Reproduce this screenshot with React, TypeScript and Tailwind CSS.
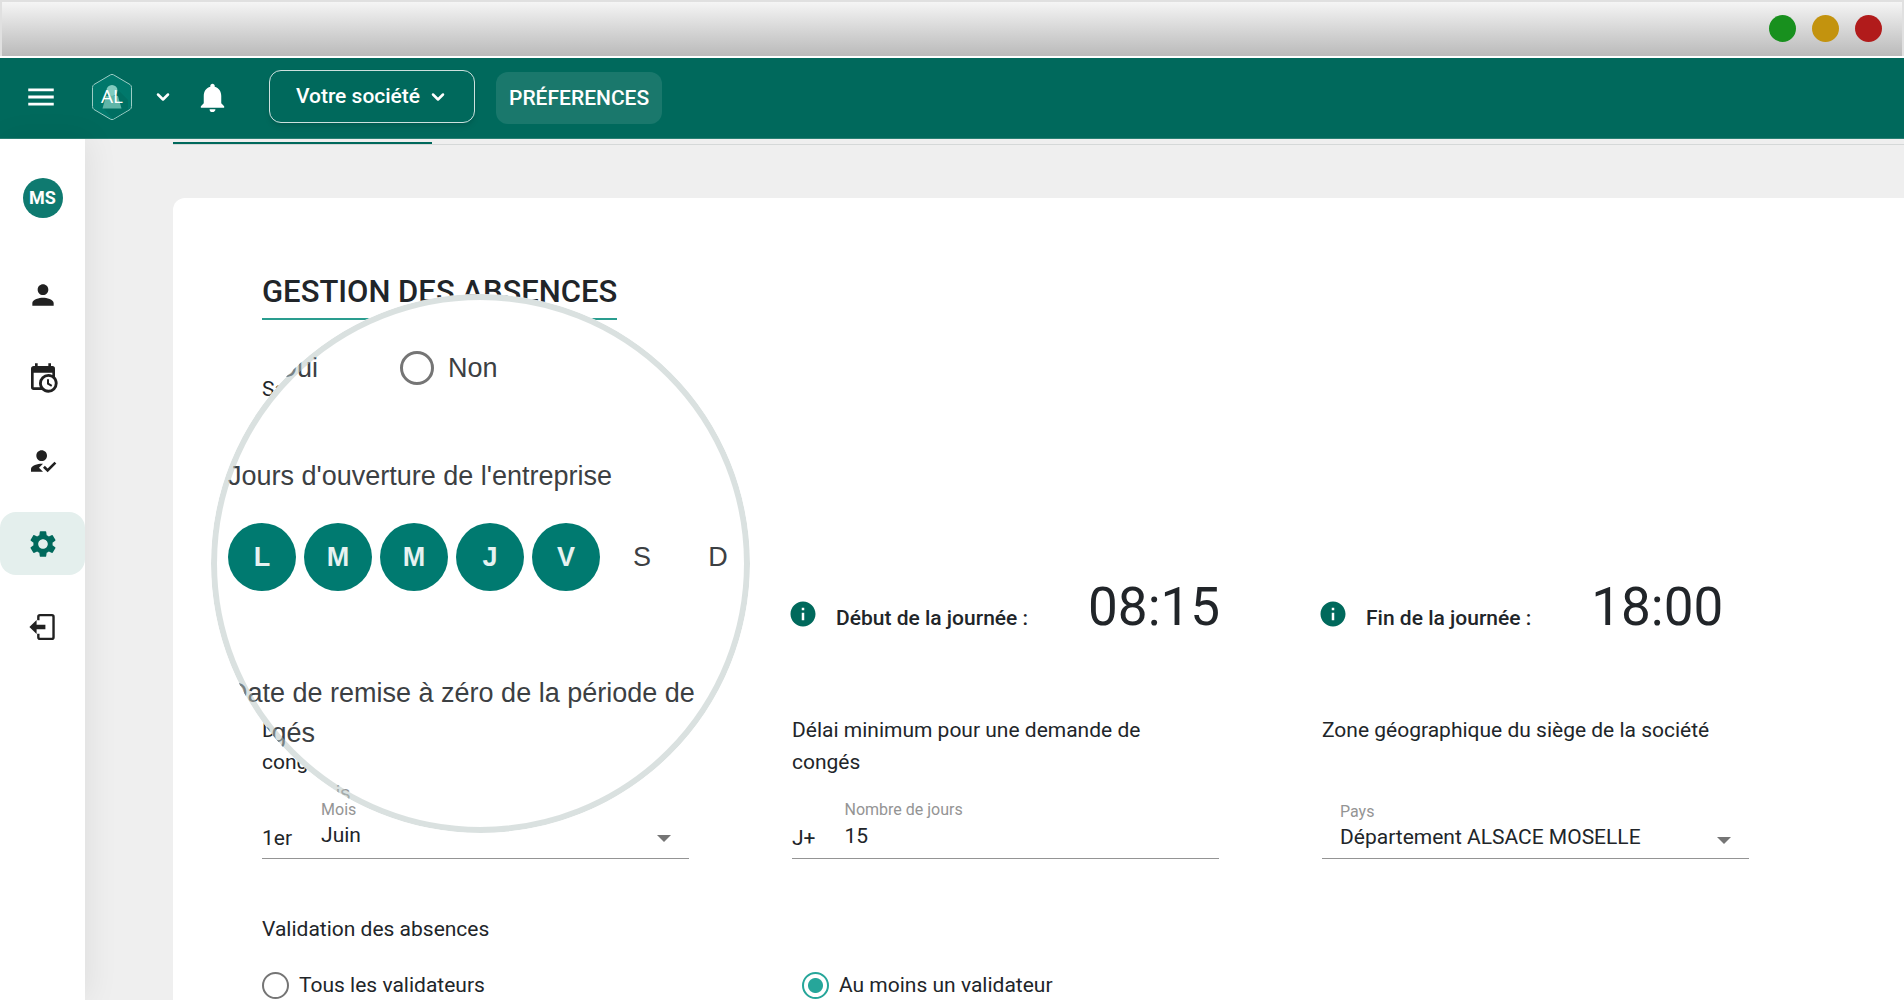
import React from 'react';
import { MdHowToReg, MdInfo, MdMenu, MdNotifications, MdPerson, MdSettings } from 'react-icons/md';
import { FiChevronDown } from 'react-icons/fi';

interface DayProps {
  id: string;
  letter: string;
  open: boolean;
}

interface TimeProps {
  label: string;
  time: string;
}

interface FieldProps {
  id: string;
  label: string;
  prefix?: string;
  children: React.ReactNode;
}

interface RadioProps {
  name: string;
  label: string;
  checked?: boolean;
}

const days: DayProps[] = [
  { id: 'lundi', letter: 'L', open: true },
  { id: 'mardi', letter: 'M', open: true },
  { id: 'mercredi', letter: 'M', open: true },
  { id: 'jeudi', letter: 'J', open: true },
  { id: 'vendredi', letter: 'V', open: true },
  { id: 'samedi', letter: 'S', open: false },
  { id: 'dimanche', letter: 'D', open: false },
];

const CalendarClockIcon = () => (
  <svg viewBox="0 0 24 24" className="size-8" fill="currentColor">
    <path d="M15 13h1.5v2.82l2.44 1.41-.75 1.3L15 16.69V13m4-5H5v11h4.67c-.43-.91-.67-1.93-.67-3a7 7 0 0 1 7-7c1.07 0 2.09.24 3 .67V8M5 21a2 2 0 0 1-2-2V5c0-1.11.89-2 2-2h1V1h2v2h8V1h2v2h1a2 2 0 0 1 2 2v6.1c1.24 1.26 2 2.99 2 4.9a7 7 0 0 1-7 7c-1.91 0-3.64-.76-4.9-2H5m11-9.85A4.85 4.85 0 0 0 11.15 16c0 2.68 2.17 4.85 4.85 4.85A4.85 4.85 0 0 0 20.85 16c0-2.68-2.17-4.85-4.85-4.85z" />
  </svg>
);

const LogoutIcon = () => (
  <svg viewBox="0 0 24 24" className="size-8">
    <path d="M8.500 7V4.300c0-.7.5-1.200 1.200-1.200h9c.7 0 1.200.5 1.200 1.200v15.400c0 .7-.5 1.200-1.200 1.200h-9c-.7 0-1.200-.5-1.200-1.200V17" fill="none" stroke="currentColor" strokeWidth="1.8" />
    <path d="M1.800 12 7.200 6.800v3.500h6.600v3.400H7.200v3.500z" fill="currentColor" />
  </svg>
);

const Logo = () => (
  <svg viewBox="0 0 42 48" className="h-12 w-[42px]">
    <path d="M19.500 1.800Q21 1 22.500 1.800L39 11.500Q40.500 12.500 40.500 14.500V33.500Q40.500 35.500 39 36.500L22.500 46.200Q21 47 19.500 46.200L3 36.500Q1.500 35.500 1.500 33.500V14.500Q1.500 12.500 3 11.500Z" fill="#00786b" stroke="#9ccdc5" />
    <path d="M26 16 37 27V37L22 46 13 36Z" fill="#00695c" opacity=".6" />
    <circle cx="21" cy="17.500" r="5.500" fill="#80cbbf" />
    <path d="M15 23h12l3.500 12.500h-19z" fill="#5fb5a8" />
    <text x="21" y="30" textAnchor="middle" fontSize="19" fontFamily="Open Sans, sans-serif" fill="#fff">AL</text>
  </svg>
);

const Sidebar: React.FC = () => (
  <aside className="z-10 w-[85px] shrink-0 bg-white pt-[39px] text-[#212121] shadow-[4px_0_32px_rgba(0,0,0,0.07)]">
    <div className="mx-auto flex size-10 items-center justify-center rounded-full bg-[#0f7a70] text-lg font-bold text-white">MS</div>
    <nav className="mt-[45px] flex flex-col gap-5">
      <a href="#profil" aria-label="Profil" className="flex h-[63px] items-center justify-center"><MdPerson className="size-8" /></a>
      <a href="#planning" aria-label="Planning" className="flex h-[63px] items-center justify-center"><CalendarClockIcon /></a>
      <a href="#validation" aria-label="Validation" className="flex h-[63px] items-center justify-center"><MdHowToReg className="size-8" /></a>
      <a href="#preferences" aria-label="Préférences" className="flex h-[63px] items-center justify-center rounded-2xl bg-[#e4efed] text-[#00695c]"><MdSettings className="size-8" /></a>
      <a href="#sortie" aria-label="Déconnexion" className="flex h-[63px] items-center justify-center"><LogoutIcon /></a>
    </nav>
  </aside>
);

const DayTime: React.FC<TimeProps> = ({ label, time }) => (
  <div className="flex items-baseline whitespace-nowrap">
    <MdInfo className="mt-3.5 -ml-1 size-[30px] shrink-0 self-center text-[#00695c]" />
    <span className="ml-[18px] font-medium">{label}</span>
    <time className="ml-[60px] text-[53px] leading-[64px]">{time}</time>
  </div>
);

const Field: React.FC<FieldProps> = ({ id, label, prefix, children }) => (
  <div className="flex items-end gap-[29px] border-b border-[#949494] pb-1">
    {prefix && <span className="leading-8">{prefix}</span>}
    <div className={prefix ? 'relative mb-0.5 flex flex-1 flex-col' : 'relative flex flex-1 flex-col pl-[18px]'}>
      <label htmlFor={id} className="text-base leading-5 text-[#949494]">{label}</label>
      {children}
    </div>
  </div>
);

const Arrow = () => (
  <svg viewBox="0 0 14 7" className="pointer-events-none absolute right-[18px] bottom-2.5 h-[7px] w-3.5">
    <path d="M0 0h14L7 7z" fill="#757575" />
  </svg>
);

const Radio: React.FC<RadioProps> = ({ name, label, checked }) => (
  <label className="flex items-center gap-2.5">
    <input
      type="radio"
      name={name}
      defaultChecked={checked}
      className="size-[27px] appearance-none rounded-full border-2 border-[#757575] bg-white checked:border-[#26a69a] checked:bg-[radial-gradient(circle,#26a69a_7px,#fff_8px)]"
    />
    {label}
  </label>
);

// Enlarged view of the opening days, laid over the form
const Magnifier: React.FC = () => (
  <div className="absolute top-24 left-[38px] size-[539px] overflow-hidden rounded-full bg-white font-['Liberation_Sans',sans-serif] text-[27px] leading-10 text-[#3c4043]">
    <div className="w-[600px] pt-[54px] pl-[17px]">
      <div className="flex pl-12">
        <span className="w-[124px]">Oui</span>
        <label className="flex items-center gap-3.5">
          <input type="radio" name="samedi" className="size-[34px] appearance-none rounded-full border-[3px] border-[#757575]" />
          Non
        </label>
      </div>
      <p className="mt-[68px]">Jours d'ouverture de l'entreprise</p>
      <div className="mt-[27px] flex gap-2">
        {days.map((day) => (
          <button
            key={day.id}
            type="button"
            className={day.open ? 'size-[68px] rounded-full bg-[#007a70] font-bold text-white/90' : 'size-[68px] rounded-full'}
          >
            {day.letter}
          </button>
        ))}
      </div>
      <p className="mt-[82px] w-[480px]">Date de remise à zéro de la période de congés</p>
      <p className="mt-[26px] pl-20 text-xl text-[#949494]">Mois</p>
    </div>
    <div className="absolute inset-0 rounded-full border-[6px] border-[#b5c3c1]/50" />
  </div>
);

const App: React.FC = () => {
  return (
    <div className="flex h-screen flex-col overflow-hidden bg-[#efefef] font-[Roboto,sans-serif] text-[21px] text-[#212529]">
      <div className="flex h-14 shrink-0 items-center justify-end gap-4 border-2 border-b-0 border-[#e0e0e0] bg-linear-to-b from-[#f5f5f5] to-[#bababa] pr-5 pb-0.5">
        <span className="size-[27px] rounded-full bg-[#18901e]" />
        <span className="size-[27px] rounded-full bg-[#c3930e]" />
        <span className="size-[27px] rounded-full bg-[#b11b1b]" />
      </div>
      <div className="h-0.5 shrink-0 bg-white" />

      <header className="flex h-[81px] shrink-0 items-center border-b border-[#2a8074] bg-[#00695c] pb-[3px] pl-6 font-medium text-white">
        <button type="button" aria-label="Menu"><MdMenu className="size-[34px]" /></button>
        <button type="button" aria-label="Compte" className="ml-[33px] flex items-center gap-5">
          <Logo />
          <FiChevronDown className="size-5" strokeWidth={3} />
        </button>
        <button type="button" aria-label="Notifications" className="ml-[22px] pt-0.5"><MdNotifications className="size-[35px]" /></button>
        <button type="button" className="ml-[39px] flex h-[53px] w-[206px] items-center justify-center gap-2 rounded-xl border border-white/80 shadow-md">
          Votre société
          <FiChevronDown className="size-5" strokeWidth={3} />
        </button>
        <button type="button" className="mt-0.5 ml-[21px] h-[52px] rounded-xl bg-white/10 px-[13px] pt-0.5">PRÉFERENCES</button>
      </header>

      <div className="flex min-h-0 flex-1">
        <Sidebar />
        <main className="ml-[88px] flex min-w-0 flex-1 flex-col">
          <div className="mt-[3px] border-b border-[#d5d8d8]">
            <div className="h-0.5 w-[259px] bg-[#00695c]" />
          </div>

          <section className="relative mt-[53px] flex-1 rounded-tl-xl bg-white pt-[72px] pr-[155px] pl-[89px]">
            <h1 className="inline-block border-b-2 border-[#2a9d8f] pb-1 text-[31px] leading-[44px] font-medium">GESTION DES ABSENCES</h1>
            <p className="mt-[53px] leading-8">Sa</p>

            <div className="mt-[170px] grid grid-cols-3 gap-x-[103px]">
              <div className="col-start-2"><DayTime label="Début de la journée :" time="08:15" /></div>
              <DayTime label="Fin de la journée :" time="18:00" />
            </div>

            <div className="mt-[75px] grid grid-cols-3 gap-x-[103px]">
              <p className="pr-14 leading-8">Date de remise à zéro de la période de congés</p>
              <p className="pr-14 leading-8">Délai minimum pour une demande de congés</p>
              <p className="leading-8">Zone géographique du siège de la société</p>
            </div>

            <div className="mt-[22px] grid grid-cols-3 gap-x-[103px]">
              <Field id="mois" label="Mois" prefix="1er">
                <select id="mois" className="h-8 appearance-none">
                  <option>Juin</option>
                </select>
                <Arrow />
              </Field>
              <Field id="jours" label="Nombre de jours" prefix="J+">
                <input id="jours" type="text" defaultValue="15" className="h-8" />
              </Field>
              <Field id="pays" label="Pays">
                <select id="pays" className="h-8 appearance-none">
                  <option>Département ALSACE MOSELLE</option>
                </select>
                <Arrow />
              </Field>
            </div>

            <p className="mt-[54px] leading-8">Validation des absences</p>
            <div className="mt-6 grid grid-cols-3 gap-x-[103px] leading-8">
              <Radio name="validation" label="Tous les validateurs" />
              <div className="pl-2.5"><Radio name="validation" label="Au moins un validateur" checked /></div>
            </div>

            <Magnifier />
          </section>
        </main>
      </div>
    </div>
  );
};

export default App;
